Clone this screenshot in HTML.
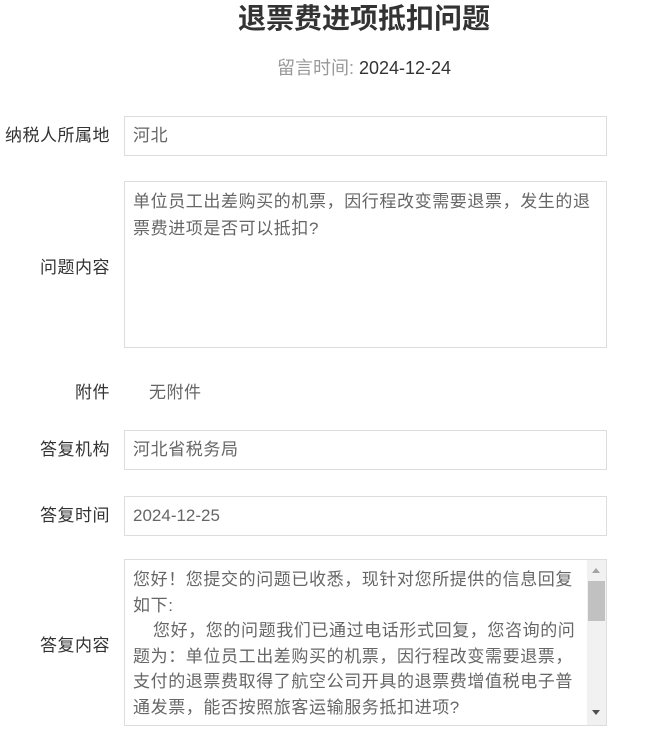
<!DOCTYPE html>
<html><head><meta charset="utf-8"><style>
body{margin:0;width:659px;height:755px;background:#fff;font-family:"Liberation Sans","Noto Sans CJK SC",sans-serif;position:relative;overflow:hidden}
.a{position:absolute}
.t{left:0;width:728px;text-align:center;top:0;font-size:28px;font-weight:bold;color:#333;line-height:38px}
.m{left:0;width:728px;text-align:center;top:56px;font-size:18px;color:#333;line-height:24px}
.lb{left:0;width:110px;text-align:right;font-size:17px;letter-spacing:0.5px;color:#333;line-height:24px}
.bx{left:124px;width:483px;border:1px solid #ddd;font-size:17px;letter-spacing:0.6px;color:#666;box-sizing:border-box;padding:0 8px;white-space:nowrap;overflow:hidden}
</style></head><body>
<div class="a t">退票费进项抵扣问题</div>
<div class="a m"><span style="color:#999">留言时间:</span> 2024-12-24</div>

<div class="a lb" style="top:124px">纳税人所属地</div>
<div class="a bx" style="top:116px;height:40px;line-height:38px">河北</div>

<div class="a lb" style="top:256px">问题内容</div>
<div class="a bx" style="top:181px;height:167px;line-height:27px;padding-top:6px">单位员工出差购买的机票，因行程改变需要退票，发生的退<br>票费进项是否可以抵扣?</div>

<div class="a lb" style="top:381px">附件</div>
<div class="a" style="left:149px;top:381px;font-size:17px;letter-spacing:0.5px;color:#666;line-height:24px">无附件</div>

<div class="a lb" style="top:438px">答复机构</div>
<div class="a bx" style="top:430px;height:40px;line-height:38px">河北省税务局</div>

<div class="a lb" style="top:504px">答复时间</div>
<div class="a bx" style="top:496px;height:40px;line-height:38px;letter-spacing:0">2024-12-25</div>

<div class="a lb" style="top:634px">答复内容</div>
<div class="a bx" style="top:559px;height:167px;line-height:25.5px;padding:7px 28px 0 8px">您好！您提交的问题已收悉，现针对您所提供的信息回复<br>如下:<br><span style="display:inline-block;width:20px"></span>您好，您的问题我们已通过电话形式回复，您咨询的问<br>题为：单位员工出差购买的机票，因行程改变需要退票，<br>支付的退票费取得了航空公司开具的退票费增值税电子普<br>通发票，能否按照旅客运输服务抵扣进项?</div>
<div class="a" style="left:587px;top:560px;width:19px;height:165px;background:#f1f1f1"></div>
<div class="a" style="left:588px;top:581px;width:17px;height:40px;background:#c1c1c1"></div>
<div class="a" style="left:592px;top:568px;width:0;height:0;border-left:4px solid transparent;border-right:4px solid transparent;border-bottom:5px solid #a3a3a3"></div>
<div class="a" style="left:592px;top:710px;width:0;height:0;border-left:4px solid transparent;border-right:4px solid transparent;border-top:5px solid #505050"></div>
</body></html>
